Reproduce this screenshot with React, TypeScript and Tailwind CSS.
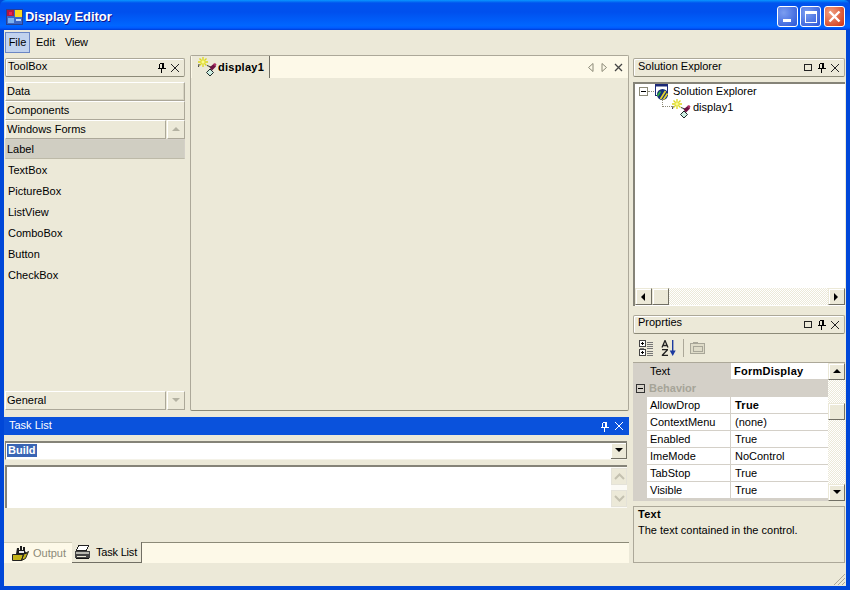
import React from "react";

function Pin({ c = "#000" }: { c?: string }) {
  return (
    <svg width="9" height="11" viewBox="0 0 9 11" fill="none" stroke={c} shapeRendering="crispEdges">
      <path d="M2.5 1.5h4M2.5 1.5v4.5M5.5 1.5v4.5M6.5 1.5v4.5M0.5 6.5h8M4.5 7v4" />
    </svg>
  );
}
function X({ c = "#222" }: { c?: string }) {
  return (
    <svg width="10" height="10" viewBox="0 0 10 10" stroke={c} strokeWidth="1">
      <path d="M1 1l8 8M9 1l-8 8" />
    </svg>
  );
}
function Square() {
  return (
    <svg width="9" height="9" viewBox="0 0 9 9" fill="none" stroke="#222" shapeRendering="crispEdges">
      <rect x="0.5" y="1.5" width="7" height="6" />
    </svg>
  );
}
function DisplayIcon({ className }: { className?: string }) {
  return (
    <svg className={className} width="20" height="20" viewBox="0 0 20 20">
      <path d="M5 0v10M0 5h10M1.5 1.5l7 7M8.5 1.5l-7 7" stroke="#dcd81a" strokeWidth="1.3" />
      <path d="M3.5 3.5h3v3h-3z" fill="#fbfa90" />
      <path d="M1 7l-.5 3M9 8.5l4 1.5" stroke="#3a3a3a" strokeWidth="1" />
      <path d="M11.5 10.5l4-3.5 2.5 2.5-4 4z" fill="#6e1242" />
      <path d="M15 7l2-1 1.5 1.5-1 2z" fill="#b03068" />
      <path d="M8.5 15.5l3.5-3.500 3.500 3.500-3.500 3.500z" fill="#cdeee2" stroke="#1e2a2a" strokeWidth="1" />
    </svg>
  );
}
function AppIcon() {
  return (
    <svg width="17" height="17" viewBox="0 0 17 17" shapeRendering="crispEdges">
      <rect x="0.5" y="1.5" width="16" height="15" fill="#3a66c8" stroke="#2a3f90" />
      <rect x="1" y="2" width="7" height="6" fill="#b01840" />
      <rect x="3" y="4" width="3" height="3" fill="#f02050" />
      <rect x="9" y="2" width="7" height="7" fill="#f8d820" />
      <rect x="2" y="10" width="6" height="5" fill="#7ab0f0" />
      <rect x="10" y="11" width="5" height="2" fill="#bcd8ff" />
    </svg>
  );
}
function SolutionIcon() {
  return (
    <svg width="16" height="16" viewBox="0 0 16 16">
      <rect x="1.5" y="0.5" width="12" height="11" fill="#fff" stroke="#1c2a78" />
      <rect x="1" y="0" width="13" height="2.5" fill="#1c2a78" />
      <circle cx="8.5" cy="10.5" r="5.5" fill="#14307a" />
      <path d="M6.5 15l5-8M9.500 15.500l4-6" stroke="#e4d430" strokeWidth="1.7" />
      <path d="M3.5 12l3-4.500" stroke="#2fae40" strokeWidth="1.7" />
    </svg>
  );
}
function CategoryIcon() {
  return (
    <svg width="15" height="16" viewBox="0 0 15 16" shapeRendering="crispEdges">
      <path d="M0.5 0.5h6v6h-6zM0.5 9.5h6v6h-6z" fill="#fff" stroke="#444" />
      <path d="M2 3.5h3M3.5 2v3M2 12.5h3M3.5 11v3" stroke="#000" />
      <path d="M8 2h6M8 4h6M8 6h6M8 8h6M8 11h6M8 13h6M8 15h6M1 8h4" stroke="#777" />
    </svg>
  );
}
function SortIcon() {
  return (
    <svg width="15" height="17" viewBox="0 0 15 17">
      <path d="M1 7.5L4 .5l3 7M2.2 5.500h3.600" stroke="#222" strokeWidth="1.3" fill="none" />
      <path d="M1 9h6v1.300l-4.300 4.400H7V16H.8v-1.300l4.300-4.400H1z" fill="#222" />
      <path d="M11 0h1.400v12H11z" fill="#1c3aa0" />
      <path d="M8.7 10.500h6L11.700 16z" fill="#1c3aa0" />
    </svg>
  );
}
function PagesIcon() {
  return (
    <svg width="15" height="12" viewBox="0 0 15 12" fill="none" stroke="#a8a698" shapeRendering="crispEdges">
      <rect x="0.5" y="1.5" width="14" height="10" fill="#dedbc8" />
      <path d="M3 1.5V0.5h4v1M3 4.5h9v5H3z" />
    </svg>
  );
}
function OutputIcon() {
  return (
    <svg width="18" height="16" viewBox="0 0 18 16">
      <path d="M0.5 9.5h11l-2 6h-9zM11.500 9.500l5-3-3 7-4 2z" fill="#c4b41a" stroke="#222" />
      <path d="M5 3h2v2h1V1h2v4h1V2h2v4l2 3H4z" fill="#1c1c1c" />
      <path d="M7 6h5v2H7z" fill="#e8e8e8" />
    </svg>
  );
}
function PrinterIcon() {
  return (
    <svg width="17" height="15" viewBox="0 0 17 15" shapeRendering="crispEdges">
      <path d="M4.5 0.5h10l-2 5h-10z" fill="#fff" stroke="#222" />
      <path d="M1 6h15v7H1z" fill="#444" />
      <path d="M2 7h13v2H2z" fill="#b8b8b0" />
      <path d="M3 11h9v1H3z" fill="#ece9d8" />
      <path d="M2 13h13v1H2z" fill="#111" />
    </svg>
  );
}
function Triangle({ dir, c = "#000" }: { dir: "up" | "down" | "left" | "right"; c?: string }) {
  const d = { up: "M4 1l4 4H0z", down: "M0 1h8L4 5z", left: "M5 0v8L1 4z", right: "M1 0v8l4-4z" }[dir];
  return (
    <svg width="8" height="8" viewBox="0 0 8 8" fill={c}>
      <path d={d} />
    </svg>
  );
}
function Chevron({ up }: { up?: boolean }) {
  return (
    <svg width="11" height="7" viewBox="0 0 11 7" fill="none" stroke="#c4c1b0" strokeWidth="2">
      <path d={up ? "M1 6l4.5-4.500L10 6" : "M1 1l4.5 4.500L10 1"} />
    </svg>
  );
}

function PanelHeader({ title, square, textClass }: { title: string; square?: boolean; textClass: string }) {
  return (
    <div className="flex h-[19px] items-center rounded-[2px] border border-[#aca899] border-b-[#8c8a78] bg-[#ece9d8] pr-1 shadow-[inset_1px_1px_0_#fff]">
      <span className={"flex-1 " + textClass}>{title}</span>
      <div className="flex items-center gap-[4px]">
        {square && <Square />}
        <Pin />
        <X />
      </div>
    </div>
  );
}

function RaisedButton({ children, className }: { children?: React.ReactNode; className?: string }) {
  return (
    <div className={"flex items-center border border-[#fff] border-r-[#aca899] border-b-[#aca899] bg-[#ece9d8] " + (className ?? "")}>
      {children}
    </div>
  );
}

function ScrollBtn({ children }: { children: React.ReactNode }) {
  return (
    <div className="flex h-[17px] w-[17px] shrink-0 items-center justify-center border border-[#ece9d8] border-r-[#716f64] border-b-[#716f64] bg-[#ece9d8] shadow-[inset_1px_1px_0_#fff]">
      {children}
    </div>
  );
}

const tools = ["TextBox", "PictureBox", "ListView", "ComboBox", "Button", "CheckBox"];
const rows: [string, string, boolean?][] = [
  ["AllowDrop", "True", true],
  ["ContextMenu", "(none)"],
  ["Enabled", "True"],
  ["ImeMode", "NoControl"],
  ["TabStop", "True"],
  ["Visible", "True"],
];
const dither = "bg-[repeating-conic-gradient(#fff_0_25%,#ece9d8_0_50%)] bg-[length:2px_2px]";

export default function App() {
  return (
    <div className="flex h-[590px] w-[850px] flex-col overflow-hidden bg-[#0047d8] font-['Liberation_Sans',sans-serif] text-[11px] leading-[13px] text-black">
      {/* Title bar */}
      <div className="flex h-[30px] shrink-0 items-center rounded-t-[6px] bg-[linear-gradient(180deg,#0997ff_0%,#0053ee_10%,#0050ee_40%,#0066ff_85%,#005bff_93%,#003dd7_100%)] pl-[6px] pr-[5px] pt-[3px]">
        <AppIcon />
        <span className="ml-[2px] flex-1 text-[13px] font-bold tracking-[-0.05px] text-white [text-shadow:1px_1px_#0f1089]">Display Editor</span>
        <div className="flex items-center gap-[2px]">
          <div className="flex h-[21px] w-[21px] items-end justify-start rounded-[3px] border border-white bg-[radial-gradient(circle_at_30%_30%,#7b9df0,#2a55d8)] pb-[4px] pl-[5px]">
            <div className="h-[3px] w-[8px] bg-white" />
          </div>
          <div className="flex h-[21px] w-[21px] items-center justify-center rounded-[3px] border border-white bg-[radial-gradient(circle_at_30%_30%,#7b9df0,#2a55d8)]">
            <div className="h-[12px] w-[12px] border border-t-[3px] border-white" />
          </div>
          <div className="ml-[1px] flex h-[21px] w-[21px] items-center justify-center rounded-[3px] border border-white bg-[radial-gradient(circle_at_30%_30%,#f0a080,#d03010)]">
            <svg width="13" height="13" viewBox="0 0 13 13" stroke="#fff" strokeWidth="2.4"><path d="M1.5 1.5l10 10M11.5 1.5l-10 10" /></svg>
          </div>
        </div>
      </div>

      {/* Window body */}
      <div className="mx-[4px] mb-[4px] flex flex-1 flex-col bg-[#ece9d8]">
        {/* Menu */}
        <div className="flex h-[25px] shrink-0 items-center pl-[1px]">
          <div className="flex h-[21px] w-[25px] items-center justify-center border border-[#6b86c4] bg-[#c1d2ee]">File</div>
          <span className="ml-[6px]">Edit</span>
          <span className="ml-[10px] tracking-[-0.2px]">View</span>
        </div>

        <div className="flex h-[508px] gap-[4px]">
          {/* Left part */}
          <div className="flex w-[625px] flex-col">
            <div className="flex h-[356px] gap-[4px]">
              {/* Toolbox */}
              <div className="flex w-[182px] flex-col pl-[1px] pr-[1px] pt-[3px]">
                <PanelHeader title="ToolBox" textClass="pl-[2px] -mt-[3px]" />
                <div className="mt-[5px] flex flex-1 flex-col">
                  <RaisedButton className="h-[19px] pl-[1px] shadow-[inset_-1px_-1px_0_#d8d5c4]">Data</RaisedButton>
                  <RaisedButton className="h-[19px] pl-[1px]">Components</RaisedButton>
                  <div className="flex h-[19px] gap-[1px]">
                    <RaisedButton className="flex-1 pl-[1px]">Windows Forms</RaisedButton>
                    <RaisedButton className="w-[18px] justify-center"><Triangle dir="up" c="#b4b2a2" /></RaisedButton>
                  </div>
                  <div className="flex h-[20px] items-center border border-[#d4d0c8] border-b-[#bdbaa8] bg-[#d0cec2] pl-[1px]">Label</div>
                  <div className="flex flex-col pl-[3px] pt-[1px]">
                    {tools.map((t) => (
                      <div key={t} className="flex h-[21px] items-center">{t}</div>
                    ))}
                  </div>
                  <div className="mb-[1px] mt-auto flex h-[19px] gap-[1px]">
                    <RaisedButton className="flex-1 pl-[1px]">General</RaisedButton>
                    <RaisedButton className="w-[18px] justify-center"><Triangle dir="down" c="#b4b2a2" /></RaisedButton>
                  </div>
                </div>
              </div>
              {/* Document */}
              <div className="flex w-[439px] flex-col rounded-[2px] border border-[#aca899] border-b-[#8c8a78]">
                <div className="flex h-[22px] items-stretch bg-[#fdf9e8] pl-[1px]">
                  <div className="flex w-[78px] items-center border-r border-[#716f64] bg-[#ece9d8] pl-[6px]">
                    <DisplayIcon />
                    <span className="font-bold tracking-[0.25px]">display1</span>
                  </div>
                  <div className="ml-auto flex items-center pr-[5px]">
                    <svg width="8" height="9" viewBox="0 0 8 9" fill="none" stroke="#8c8a78"><path d="M6 0.5v8L1.5 4.500z" /></svg>
                    <svg className="ml-[5px]" width="8" height="9" viewBox="0 0 8 9" fill="none" stroke="#8c8a78"><path d="M2 0.5v8L6.5 4.500z" /></svg>
                    <svg className="ml-[6px]" width="9" height="9" viewBox="0 0 9 9" stroke="#444" strokeWidth="1.3"><path d="M1 1l7 7M8 1l-7 7" /></svg>
                  </div>
                </div>
              </div>
            </div>

            {/* Task list */}
            <div className="mt-[6px] flex h-[18px] items-center bg-[#0a52dc] pl-[5px] pr-[5px] text-white">
              <span className="-mt-[1px] flex-1">Task List</span>
              <div className="flex items-center gap-[5px]">
                <Pin c="#fff" />
                <X c="#fff" />
              </div>
            </div>
            <div className="ml-[1px] mr-[2px] mt-[6px] flex h-[19px] items-stretch border-b border-l border-t-2 border-[#858378] border-b-[#f4f2e8] bg-white pl-[1px]">
              <div className="flex flex-1 items-center">
                <span className="-mt-[2px] bg-[#3a65b4] px-[1px] font-bold text-white">Build</span>
              </div>
              <div className="flex w-[16px] items-center justify-center border-b border-r border-[#716f64] bg-[#ece9d8] shadow-[inset_1px_1px_0_#fff]">
                <Triangle dir="down" />
              </div>
            </div>
            <div className="ml-[1px] mr-[2px] mt-[5px] flex h-[43px] border-l-2 border-t-2 border-[#858378] bg-white">
              <div className="flex-1" />
              <div className="flex w-[16px] flex-col justify-between bg-[#fbfaf5] pb-[1px] pt-[1px]">
                <div className="flex h-[17px] items-center justify-center border border-[#e4e2d8] bg-[#ece9d8]"><Chevron up /></div>
                <div className="flex h-[17px] items-center justify-center border border-[#e4e2d8] bg-[#ece9d8]"><Chevron /></div>
              </div>
            </div>

            {/* Bottom tabs */}
            <div className="mt-[34px] flex h-[21px] bg-[#fdf9e8]">
              <div className="flex w-[68px] items-center gap-[3px] border-t border-[#cfccb8] pl-[8px] text-[#8c8a78]">
                <OutputIcon />
                <span>Output</span>
              </div>
              <div className="flex w-[70px] items-center gap-[5px] border-b border-r border-[#716f64] bg-[#ece9d8] pl-[2px]">
                <PrinterIcon />
                <span className="tracking-[-0.2px]">Task List</span>
              </div>
              <div className="flex-1 border-t border-[#8c8a78]" />
            </div>
          </div>

          {/* Right part */}
          <div className="flex w-[212px] flex-col pt-[3px]">
            <PanelHeader title="Solution Explorer" square textClass="pl-[4px] -mt-[3px]" />
            <div className="mt-[5px] flex h-[224px] flex-col border-l-2 border-t-2 border-[#858378] bg-white pb-[1px]">
              <div className="flex-1 pl-[4px]">
                <div className="flex h-[15px] items-center">
                  <div className="flex h-[9px] w-[9px] items-center justify-center border border-[#8c8a78]">
                    <div className="h-[1px] w-[5px] bg-black" />
                  </div>
                  <div className="w-[6px] border-t border-dotted border-[#8c8a78]" />
                  <SolutionIcon />
                  <span className="ml-[3px]">Solution Explorer</span>
                </div>
                <div className="flex h-[16px] items-start pl-[23px]">
                  <div className="h-[8px] w-[10px] border-b border-l border-dotted border-[#8c8a78]" />
                  <DisplayIcon className="shrink-0" />
                  <span className="ml-[1px] mt-[2px]">display1</span>
                </div>
              </div>
              <div className={"flex h-[17px] " + dither}>
                <ScrollBtn><Triangle dir="left" /></ScrollBtn>
                <ScrollBtn><span /></ScrollBtn>
                <div className="flex-1" />
                <ScrollBtn><Triangle dir="right" /></ScrollBtn>
              </div>
            </div>

            <div className="mt-[9px]"><PanelHeader title="Proprties" square textClass="pl-[4px] -mt-[5px]" /></div>
            <div className="flex h-[28px] items-center pl-[6px]">
              <CategoryIcon />
              <div className="ml-[7px]"><SortIcon /></div>
              <div className="ml-[7px] h-[18px] w-[1px] bg-[#aca899]" />
              <div className="ml-[6px]"><PagesIcon /></div>
            </div>
            <div className="flex h-[139px] border-t border-[#aca899]">
              <div className="flex flex-1 flex-col bg-[#d4d0c8]">
                <div className="flex h-[17px] border-b border-[#d4d0c8] pl-[17px]">
                  <div className="flex w-[81px] items-center">Text</div>
                  <div className="flex flex-1 items-center bg-white pl-[3px] font-bold tracking-[0.25px]">FormDisplay</div>
                </div>
                <div className="flex h-[16px] items-center pl-[3px] font-bold text-[#a6a498]">
                  <div className="mr-[4px] flex h-[9px] w-[9px] items-center justify-center border border-[#333]">
                    <div className="h-[1px] w-[5px] bg-black" />
                  </div>
                  Behavior
                </div>
                {rows.map(([n, v, b]) => (
                  <div key={n} className="ml-[14px] flex h-[17px] border-t border-[#d4d0c8] bg-white">
                    <div className="flex w-[84px] items-center border-r border-[#d4d0c8] pl-[3px]">{n}</div>
                    <div className={"flex flex-1 items-center pl-[4px] " + (b ? "font-bold tracking-[0.25px]" : "")}>{v}</div>
                  </div>
                ))}
              </div>
              <div className={"flex w-[17px] flex-col " + dither}>
                <ScrollBtn><Triangle dir="up" /></ScrollBtn>
                <div className="h-[23px]" />
                <ScrollBtn><span /></ScrollBtn>
                <div className="flex-1" />
                <ScrollBtn><Triangle dir="down" /></ScrollBtn>
              </div>
            </div>
            <div className="mt-[5px] flex-1 border border-[#aca899] pl-[4px] pt-[1px]">
              <div className="font-bold tracking-[0.25px]">Text</div>
              <div className="mt-[3px]">The text contained in the control.</div>
            </div>
          </div>
        </div>

        {/* Status */}
        <div className="flex flex-1 items-end justify-end">
          <svg width="13" height="13" viewBox="0 0 13 13" stroke="#aca899"><path d="M12 1L1 12M12 5l-7 7M12 9l-3 3" /></svg>
        </div>
      </div>
    </div>
  );
}
